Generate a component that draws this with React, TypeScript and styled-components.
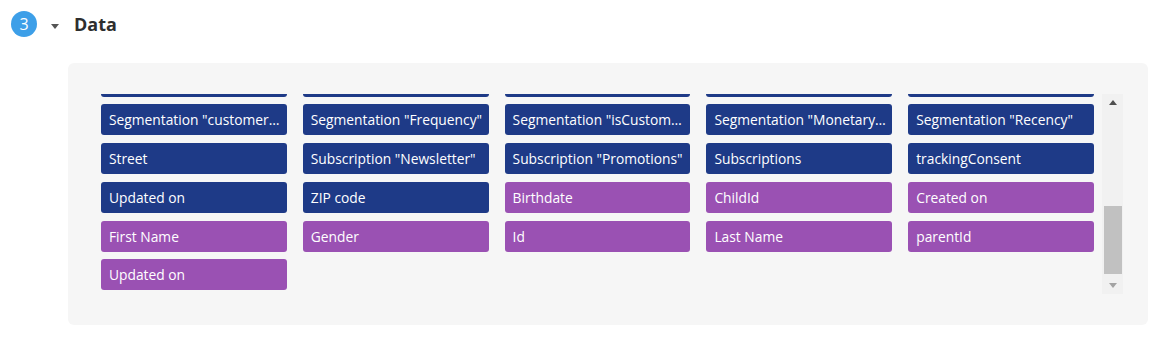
import React, { useLayoutEffect, useRef } from "react";
import styled, { createGlobalStyle } from "styled-components";

const GlobalStyle = createGlobalStyle`
  html, body {
    margin: 0;
    padding: 0;
    background: #ffffff;
    font-family: "Open Sans", "Liberation Sans", sans-serif;
  }
`;

const Page = styled.div`
  width: 1162px;
  height: 342px;
  box-sizing: border-box;
  padding: 11px 14px 0 11px;
`;

const StepHeader = styled.div`
  display: flex;
  align-items: center;
  height: 26px;
`;

const StepBadge = styled.div`
  width: 26px;
  height: 26px;
  border-radius: 50%;
  background: #3d9fe8;
  color: #ffffff;
  font-size: 16px;
  display: flex;
  align-items: center;
  justify-content: center;
`;

const Caret = styled.span`
  width: 0;
  height: 0;
  margin: 4px 15px 0 14px;
  border-left: 4.5px solid transparent;
  border-right: 4.5px solid transparent;
  border-top: 5px solid #555555;
`;

const StepTitle = styled.h2`
  margin: 0;
  font-size: 18px;
  font-weight: 700;
  color: #2e2e2e;
  line-height: 26px;
`;

const Panel = styled.div`
  margin: 26px 0 0 57px;
  height: 262px;
  box-sizing: border-box;
  background: #f6f6f6;
  border-radius: 6px;
  padding: 31px 25px 31px 33px;
  display: flex;
  gap: 8px;
`;

const Viewport = styled.div`
  flex: 1;
  height: 200px;
  overflow: hidden;
`;

const FieldGrid = styled.div`
  display: grid;
  grid-template-columns: repeat(5, 1fr);
  grid-auto-rows: 31px;
  column-gap: 16px;
  row-gap: 7.75px;
  padding-bottom: 4px;
`;

const Chip = styled.div<{ $kind: "attr" | "rel" }>`
  background: ${(p) => (p.$kind === "attr" ? "#1e3a87" : "#9a51b3")};
  color: #ffffff;
  border-radius: 3px;
  font-size: 13.8px;
  line-height: 31px;
  padding: 0 4px 0 8px;
  white-space: nowrap;
  overflow: hidden;
  text-overflow: ellipsis;
`;

const ScrollTrack = styled.div`
  width: 21px;
  height: 200px;
  background: #f1f1f1;
  display: flex;
  flex-direction: column;
  align-items: center;
`;

const ArrowButton = styled.div<{ $dir: "up" | "down"; $disabled?: boolean }>`
  height: 17px;
  display: flex;
  align-items: center;
  justify-content: center;

  &::after {
    content: "";
    border-left: 4.5px solid transparent;
    border-right: 4.5px solid transparent;
    ${(p) =>
      p.$dir === "up"
        ? `border-bottom: 5px solid ${p.$disabled ? "#a3a3a3" : "#505050"};`
        : `border-top: 5px solid ${p.$disabled ? "#a3a3a3" : "#505050"};`}
  }
`;

const ThumbZone = styled.div`
  flex: 1;
  align-self: stretch;
  display: flex;
  flex-direction: column;
  justify-content: flex-end;
  padding: 0 1px 3px 2px;
`;

const Thumb = styled.div`
  height: 68px;
  background: #c1c1c1;
`;

type Field = { name: string; kind: "attr" | "rel" };

const hidden = [
  "Address", "Age", "Brand", "Campaign", "City",
  "Company", "Country", "Created on", "Customer Id", "Customer since",
  "Date of birth", "E-mail", "E-mail opt-in", "External Id", "Fax",
  "First Name", "Gender", "Home phone", "House number", "Id",
  "Language", "Last login", "Last Name", "Last order", "Loyalty points",
  "Mobile phone", "Name", "Opt-out date", "Order count", "Phone",
  "Preferred store", "Region", "Salutation", "Segmentation \"Churn\"", "Segmentation \"Cluster\"",
];

const visibleAttrs = [
  "Segmentation \"customerLifetimeValue\"",
  "Segmentation \"Frequency\"",
  "Segmentation \"isCustomer\"",
  "Segmentation \"Monetary value\"",
  "Segmentation \"Recency\"",
  "Street",
  "Subscription \"Newsletter\"",
  "Subscription \"Promotions\"",
  "Subscriptions",
  "trackingConsent",
  "Updated on",
  "ZIP code",
];

const relFields = [
  "Birthdate", "ChildId", "Created on", "First Name", "Gender",
  "Id", "Last Name", "parentId", "Updated on",
];

const fields: Field[] = [
  ...hidden.map((name) => ({ name, kind: "attr" as const })),
  ...visibleAttrs.map((name) => ({ name, kind: "attr" as const })),
  ...relFields.map((name) => ({ name, kind: "rel" as const })),
];

const App: React.FC = () => {
  const viewRef = useRef<HTMLDivElement>(null);

  useLayoutEffect(() => {
    if (viewRef.current) viewRef.current.scrollTop = viewRef.current.scrollHeight;
  }, []);

  return (
    <Page>
      <GlobalStyle />
      <StepHeader>
        <StepBadge>3</StepBadge>
        <Caret />
        <StepTitle>Data</StepTitle>
      </StepHeader>
      <Panel>
        <Viewport ref={viewRef}>
          <FieldGrid>
            {fields.map((f, i) => (
              <Chip key={i} $kind={f.kind}>
                {f.name}
              </Chip>
            ))}
          </FieldGrid>
        </Viewport>
        <ScrollTrack>
          <ArrowButton $dir="up" />
          <ThumbZone>
            <Thumb />
          </ThumbZone>
          <ArrowButton $dir="down" $disabled />
        </ScrollTrack>
      </Panel>
    </Page>
  );
};

export default App;
